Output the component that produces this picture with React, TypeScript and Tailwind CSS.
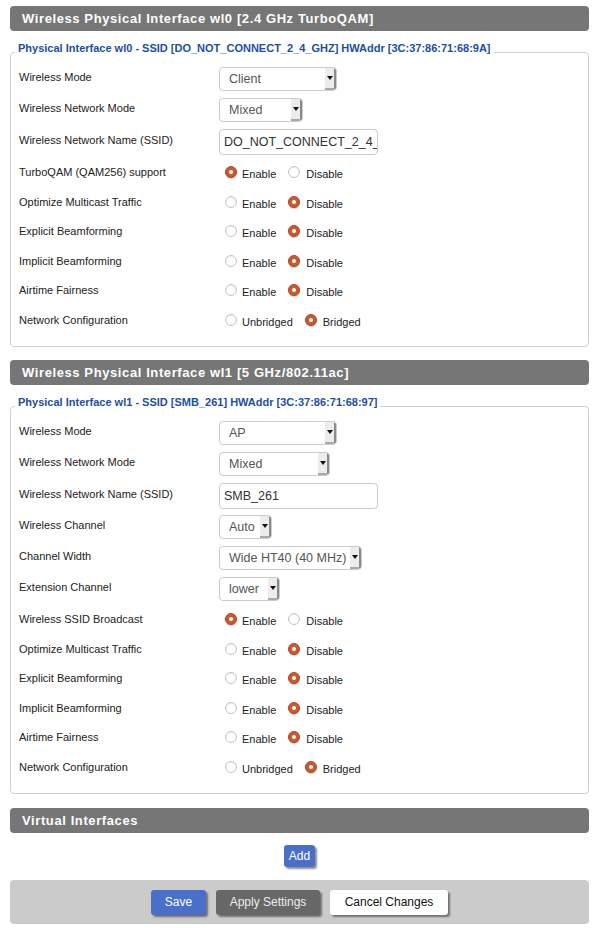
import React from "react";

const FONT = { fontFamily: '"Liberation Sans", Arial, sans-serif' };

function Header({ children }: { children: React.ReactNode }) {
  return (
    <div className="h-[25px] rounded-[4px] bg-[#767676] pl-[12px] flex items-center text-white text-[13px] font-bold tracking-[0.6px]">
      {children}
    </div>
  );
}

function Select({ value, width }: { value: string; width: number }) {
  return (
    <div
      className="h-[24px] flex items-stretch rounded-[4px] border border-[#cccccc] bg-white overflow-hidden"
      style={{ width }}
    >
      <div className="flex-1 flex items-center pl-[9px] text-[12.5px] text-[#555555] whitespace-nowrap overflow-hidden">{value}</div>
      <div className="w-[11px] shrink-0 bg-[#ececec] border-r-2 border-b-2 border-r-[#8a8a8a] border-b-[#a8a8a8] rounded-r-[2px] flex items-center justify-center">
        <svg width="6" height="4" viewBox="0 0 6 4">
          <path d="M0 0 L6 0 L3 4 Z" fill="#111" />
        </svg>
      </div>
    </div>
  );
}

function TextInput({ value }: { value: string }) {
  return (
    <div className="h-[26px] w-[159px] rounded-[4px] border border-[#cccccc] bg-white flex items-center pl-[4px] overflow-hidden text-[12.5px] text-[#333333] whitespace-nowrap">
      {value}
    </div>
  );
}

function Radio({ checked }: { checked: boolean }) {
  return checked ? (
    <div className="w-[12px] h-[12px] mt-[5px] rounded-full bg-[#c95a30] border border-[#b04a22] flex items-center justify-center shrink-0 shadow-[0_1px_1px_rgba(0,0,0,0.2)]">
      <div className="w-[4px] h-[4px] rounded-full bg-white" />
    </div>
  ) : (
    <div className="w-[12px] h-[12px] mt-[5px] rounded-full bg-white border border-[#c4c4c4] shrink-0 shadow-[inset_0_1px_1px_rgba(0,0,0,0.08)]" />
  );
}

function RadioGroup({ a, b, sel }: { a: string; b: string; sel: 0 | 1 }) {
  return (
    <div className="flex items-start ml-[6px] text-[11px] leading-[13px] text-[#222222]">
      <Radio checked={sel === 0} />
      <span className="ml-[5px] pt-[7px]">{a}</span>
      <div className="ml-[12px] flex items-start">
        <Radio checked={sel === 1} />
        <span className="ml-[6px] pt-[7px]">{b}</span>
      </div>
    </div>
  );
}

type RowKind = "select" | "input" | "radio";

function Row({ label, kind, children }: { label: string; kind: RowKind; children: React.ReactNode }) {
  const h = kind === "select" ? "h-[31px]" : kind === "input" ? "h-[32px]" : "h-[29.5px]";
  const pt = kind === "select" ? "pt-[4px]" : kind === "input" ? "pt-[5px]" : "pt-[5px]";
  return (
    <div className={`flex items-start ${h}`}>
      <div className={`w-[200px] shrink-0 text-[11px] leading-[13px] text-[#222222] ${pt}`}>{label}</div>
      {children}
    </div>
  );
}

function Fieldset({ legend, children }: { legend: string; children: React.ReactNode }) {
  return (
    <fieldset className="mt-[11px] border border-[#cfcfcf] rounded-[4px] pl-[8px] pr-[8px] pt-[5px] pb-[8px]">
      <legend className="ml-[-4px] px-[3px] pb-[7px] text-[11px] leading-[13px] font-bold text-[#1d4ea3]">
        {legend}
      </legend>
      {children}
    </fieldset>
  );
}

export default function App() {
  return (
    <div className="w-[594px] min-h-[932px] bg-white pl-[10px] pr-[5px] pt-[6px]" style={FONT}>
      <Header>Wireless Physical Interface wl0 [2.4 GHz TurboQAM]</Header>
      <Fieldset legend="Physical Interface wl0 - SSID [DO_NOT_CONNECT_2_4_GHZ] HWAddr [3C:37:86:71:68:9A]">
        <Row label="Wireless Mode" kind="select">
          <Select value="Client" width={118} />
        </Row>
        <Row label="Wireless Network Mode" kind="select">
          <Select value="Mixed" width={84} />
        </Row>
        <Row label="Wireless Network Name (SSID)" kind="input">
          <TextInput value="DO_NOT_CONNECT_2_4_" />
        </Row>
        <Row label="TurboQAM (QAM256) support" kind="radio">
          <RadioGroup a="Enable" b="Disable" sel={0} />
        </Row>
        <Row label="Optimize Multicast Traffic" kind="radio">
          <RadioGroup a="Enable" b="Disable" sel={1} />
        </Row>
        <Row label="Explicit Beamforming" kind="radio">
          <RadioGroup a="Enable" b="Disable" sel={1} />
        </Row>
        <Row label="Implicit Beamforming" kind="radio">
          <RadioGroup a="Enable" b="Disable" sel={1} />
        </Row>
        <Row label="Airtime Fairness" kind="radio">
          <RadioGroup a="Enable" b="Disable" sel={1} />
        </Row>
        <Row label="Network Configuration" kind="radio">
          <RadioGroup a="Unbridged" b="Bridged" sel={1} />
        </Row>
      </Fieldset>

      <div className="mt-[13px]">
        <Header>Wireless Physical Interface wl1 [5 GHz/802.11ac]</Header>
      </div>
      <Fieldset legend="Physical Interface wl1 - SSID [SMB_261] HWAddr [3C:37:86:71:68:97]">
        <Row label="Wireless Mode" kind="select">
          <Select value="AP" width={118} />
        </Row>
        <Row label="Wireless Network Mode" kind="select">
          <Select value="Mixed" width={111} />
        </Row>
        <Row label="Wireless Network Name (SSID)" kind="input">
          <TextInput value="SMB_261" />
        </Row>
        <Row label="Wireless Channel" kind="select">
          <Select value="Auto" width={53} />
        </Row>
        <Row label="Channel Width" kind="select">
          <Select value="Wide HT40 (40 MHz)" width={143} />
        </Row>
        <Row label="Extension Channel" kind="select">
          <Select value="lower" width={61} />
        </Row>
        <Row label="Wireless SSID Broadcast" kind="radio">
          <RadioGroup a="Enable" b="Disable" sel={0} />
        </Row>
        <Row label="Optimize Multicast Traffic" kind="radio">
          <RadioGroup a="Enable" b="Disable" sel={1} />
        </Row>
        <Row label="Explicit Beamforming" kind="radio">
          <RadioGroup a="Enable" b="Disable" sel={1} />
        </Row>
        <Row label="Implicit Beamforming" kind="radio">
          <RadioGroup a="Enable" b="Disable" sel={1} />
        </Row>
        <Row label="Airtime Fairness" kind="radio">
          <RadioGroup a="Enable" b="Disable" sel={1} />
        </Row>
        <Row label="Network Configuration" kind="radio">
          <RadioGroup a="Unbridged" b="Bridged" sel={1} />
        </Row>
      </Fieldset>

      <div className="mt-[14px]">
        <Header>Virtual Interfaces</Header>
      </div>
      <div className="flex justify-center mt-[12px]">
        <button className="h-[22px] px-[5px] rounded-[3px] bg-[#4a6fca] text-white text-[12px] shadow-[2px_2px_2px_rgba(0,0,0,0.45)]">Add</button>
      </div>
      <div className="mt-[13px] h-[44px] rounded-[4px] bg-[#cbcbcb] flex items-center justify-center gap-[10px]">
        <button className="h-[25px] w-[55px] rounded-[3px] bg-[#4a6fca] text-white text-[12px] shadow-[2px_2px_2px_rgba(0,0,0,0.45)]">Save</button>
        <button className="h-[25px] w-[104px] rounded-[3px] bg-[#676767] text-[#eeeeee] text-[12px] shadow-[2px_2px_2px_rgba(0,0,0,0.45)]">Apply Settings</button>
        <button className="h-[25px] w-[118px] rounded-[3px] bg-white text-[#111111] text-[12px] shadow-[2px_2px_2px_rgba(0,0,0,0.45)]">Cancel Changes</button>
      </div>
    </div>
  );
}
